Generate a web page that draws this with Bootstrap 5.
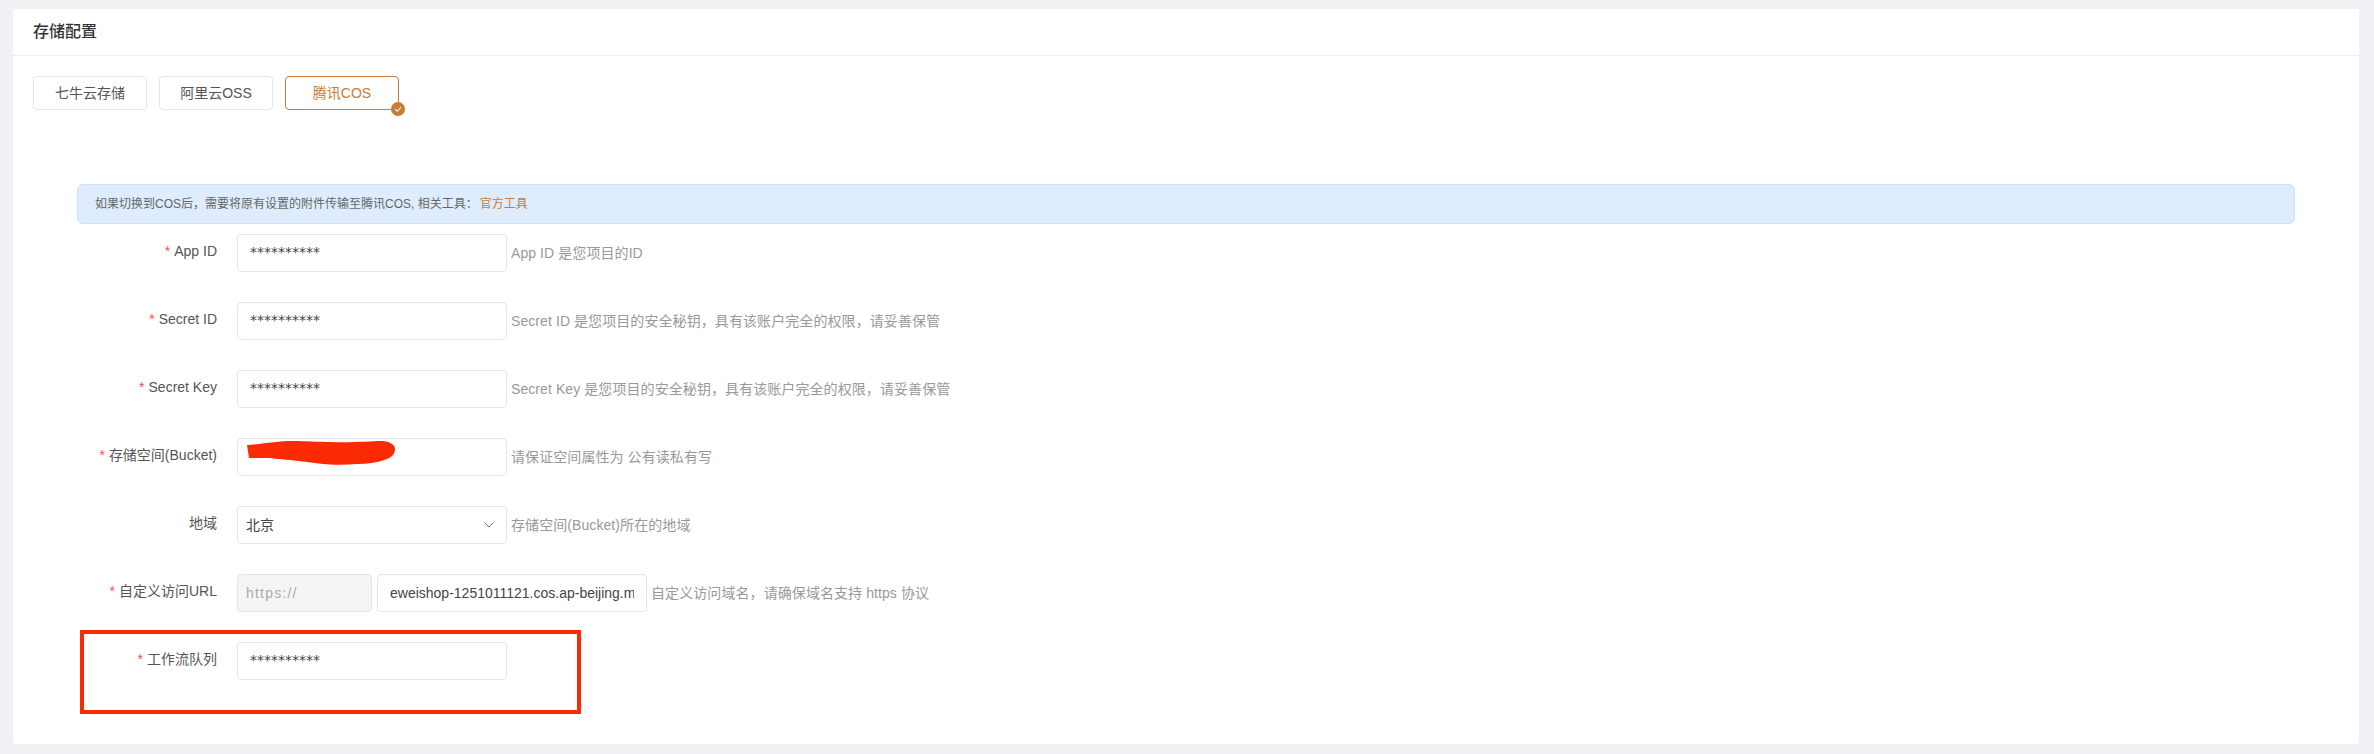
<!DOCTYPE html>
<html lang="zh-CN">
<head>
  <meta charset="UTF-8" />
  <meta name="viewport" content="width=device-width, initial-scale=1.0" />
  <title>存储配置</title>
  <link href="https://cdn.jsdelivr.net/npm/bootstrap@5.3.2/dist/css/bootstrap.min.css" rel="stylesheet" />
  <style>
    body {
      background-color: #f0f0f5;
      padding: 9px 15px 10px 13px;
      font-family: "Liberation Sans", "Noto Sans CJK SC", sans-serif;
      font-size: 14px;
      color: #555;
    }

    .cfg-card {
      height: 735px;
      border: 0;
      border-radius: 4px;
    }

    .cfg-head {
      height: 47px;
      padding: 0 20px;
      background: #fff;
      border-bottom: 1px solid #eee;
      font-size: 16px;
      font-weight: 500;
      line-height: 46px;
      color: #333;
    }

    .cfg-body {
      padding: 20px;
    }

    .cfg-tab {
      position: relative;
      width: 114px;
      height: 34px;
      padding: 0;
      border: 1px solid #e5e5e5;
      border-radius: 4px;
      font-size: 14px;
      color: #555;
    }

    .cfg-tab.is-active {
      border-color: #c97c35;
      color: #c97c35;
    }

    .cfg-check {
      position: absolute;
      right: -7px;
      bottom: -7px;
      width: 14px;
      height: 14px;
    }

    .cfg-form {
      margin: 74px 44px 0 44px;
    }

    .cfg-note {
      height: 40px;
      margin-bottom: 10px;
      padding: 0 17px;
      background: #deecfd;
      border: 1px solid #cfe2fb;
      border-radius: 6px;
      font-size: 12px;
      line-height: 38px;
      color: #666;
    }

    .cfg-note a {
      margin-left: 2px;
      color: #c97c35;
      text-decoration: none;
    }

    .cfg-row {
      position: relative;
      display: flex;
      align-items: center;
      height: 38px;
      margin-bottom: 30px;
    }

    .cfg-label {
      flex: 0 0 140px;
      margin: 0 20px 3px 0;
      text-align: right;
      color: #555;
    }

    .cfg-label i {
      font-style: normal;
      color: #f0524b;
      margin-right: 4px;
    }

    .cfg-input {
      flex: 0 0 270px;
      width: 270px;
      height: 38px;
      padding: 0 12px;
      border: 1px solid #e5e5e5;
      border-radius: 4px;
      font-size: 14px;
      color: #444;
    }

    .cfg-input.is-masked {
      font-family: "DejaVu Sans", sans-serif;
      padding-bottom: 3px;
    }

    .cfg-input.form-select {
      padding-left: 8px;
      background-image: url("data:image/svg+xml,%3csvg xmlns='http://www.w3.org/2000/svg' viewBox='0 0 10 6'%3e%3cpath fill='none' stroke='%23777' stroke-width='1' d='M.5.5l4.5 4.5 4.5-4.5'/%3e%3c/svg%3e");
      background-size: 10px 6px;
      background-position: right 12px center;
    }

    .cfg-input.is-prefix {
      flex-basis: 135px;
      width: 135px;
      padding-left: 8px;
      margin-right: 5px;
      background: #f5f5f5;
      color: #aaa;
      letter-spacing: 1.2px;
    }

    .cfg-desc {
      margin-left: 4px;
      color: #999;
      white-space: nowrap;
      letter-spacing: .08px;
    }

    .cfg-scribble {
      position: absolute;
      left: 170px;
      top: 3px;
      width: 148px;
      height: 24px;
    }

    .cfg-mark {
      position: absolute;
      left: 3px;
      top: -12px;
      width: 501px;
      height: 84px;
      border: 4px solid #fa2a05;
      pointer-events: none;
    }
  </style>
</head>
<body>
  <div class="card cfg-card">
    <div class="cfg-head">存储配置</div>
    <div class="cfg-body">
      <div class="d-flex gap-2 cfg-tabs">
        <button type="button" class="btn cfg-tab me-1">七牛云存储</button>
        <button type="button" class="btn cfg-tab me-1">阿里云OSS</button>
        <button type="button" class="btn cfg-tab is-active">腾讯COS
          <svg class="cfg-check" viewBox="0 0 14 14">
            <circle cx="7" cy="7" r="7" fill="#c97c35" />
            <path d="M4 7.2l2.2 2.1L10.2 5" fill="none" stroke="#fff" stroke-width="1.1" />
          </svg>
        </button>
      </div>

      <form class="cfg-form">
        <div class="cfg-note">如果切换到COS后，需要将原有设置的附件传输至腾讯COS, 相关工具：<a href="#">官方工具</a></div>

        <div class="cfg-row">
          <label class="cfg-label"><i>*</i>App ID</label>
          <input type="text" class="form-control cfg-input is-masked" value="**********" />
          <span class="cfg-desc">App ID 是您项目的ID</span>
        </div>
        <div class="cfg-row">
          <label class="cfg-label"><i>*</i>Secret ID</label>
          <input type="text" class="form-control cfg-input is-masked" value="**********" />
          <span class="cfg-desc">Secret ID 是您项目的安全秘钥，具有该账户完全的权限，请妥善保管</span>
        </div>
        <div class="cfg-row">
          <label class="cfg-label"><i>*</i>Secret Key</label>
          <input type="text" class="form-control cfg-input is-masked" value="**********" />
          <span class="cfg-desc">Secret Key 是您项目的安全秘钥，具有该账户完全的权限，请妥善保管</span>
        </div>
        <div class="cfg-row">
          <label class="cfg-label"><i>*</i>存储空间(Bucket)</label>
          <input type="text" class="form-control cfg-input" value="" />
          <span class="cfg-desc">请保证空间属性为 公有读私有写</span>
          <!-- 涂抹掉的桶名 -->
          <svg class="cfg-scribble" viewBox="0 0 148 24">
            <path d="M0 4C15 3 32 0 45 0C60 0 70 1 83 1C105 2 122 0 136 0C144 1 148 4 148 8C148 13 145 16 140 18C130 22 120 23 110 23C98 24 86 24 76 23C65 22 55 20 43 19C32 18 24 17 16 17L2 17Z" fill="#fa2a05" />
          </svg>
        </div>
        <div class="cfg-row">
          <label class="cfg-label">地域</label>
          <select class="form-select cfg-input">
            <option>北京</option>
          </select>
          <span class="cfg-desc">存储空间(Bucket)所在的地域</span>
        </div>
        <div class="cfg-row">
          <label class="cfg-label"><i>*</i>自定义访问URL</label>
          <input type="text" class="form-control cfg-input is-prefix" value="https://" disabled />
          <input type="text" class="form-control cfg-input" value="eweishop-1251011121.cos.ap-beijing.myqcloud.com" />
          <span class="cfg-desc">自定义访问域名，请确保域名支持 https 协议</span>
        </div>
        <div class="cfg-row">
          <label class="cfg-label"><i>*</i>工作流队列</label>
          <input type="text" class="form-control cfg-input is-masked" value="**********" />
          <div class="cfg-mark"></div>
        </div>
      </form>
    </div>
  </div>

  <script src="https://cdn.jsdelivr.net/npm/bootstrap@5.3.2/dist/js/bootstrap.bundle.min.js"></script>
</body>
</html>
